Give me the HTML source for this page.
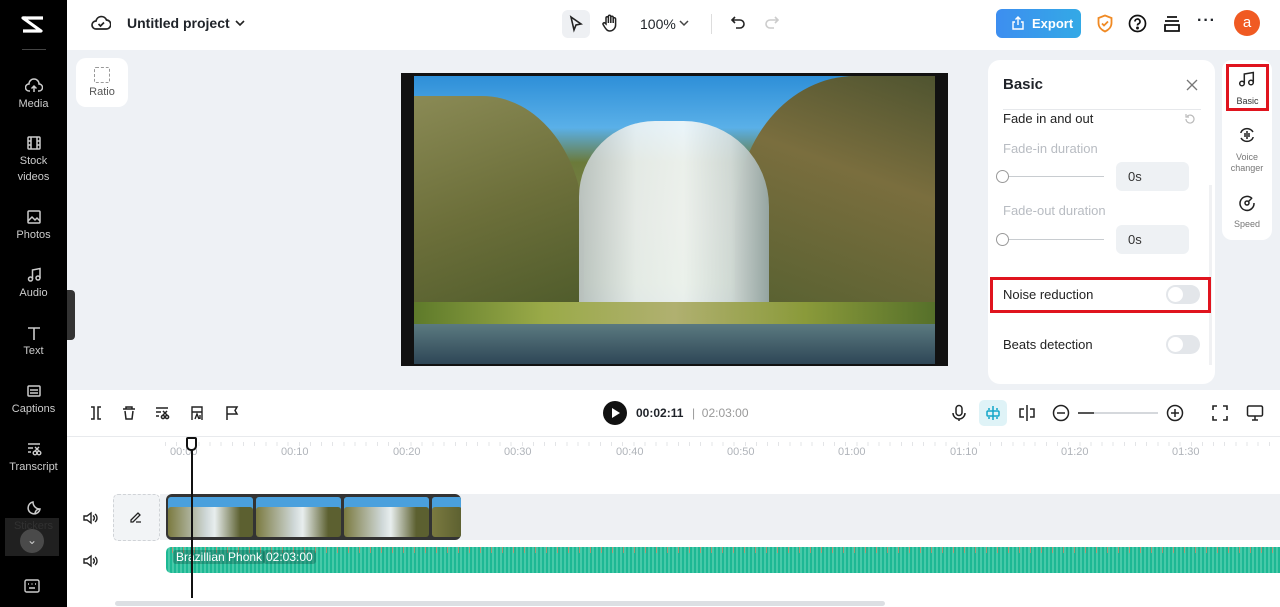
<!DOCTYPE html><html><head><style>
*{margin:0;padding:0;box-sizing:border-box}
body{width:1280px;height:607px;overflow:hidden;font-family:"Liberation Sans",sans-serif;background:#fff;position:relative;color:#1f2329}
.a{position:absolute}
.side{left:0;top:0;width:67px;height:607px;background:#000}
.si{position:absolute;left:0;width:67px;text-align:center;color:#ccc;font-size:11px;line-height:16px}
.si svg{display:block;margin:0 auto 2px}
.tick{position:absolute;top:446px;font-size:11px;color:#b0b4ba}
</style></head><body>
<div class="a side"></div>
<svg class="a" style="left:18px;top:13px" width="28" height="24" viewBox="0 0 28 24" fill="none" stroke="#fff" stroke-width="3.2" stroke-linejoin="round"><path d="M25 5H5l18 13H5"/><path d="M5 5l3 0M5 18l0 0"/></svg>
<div class="a" style="left:22px;top:49px;width:24px;height:1px;background:#444"></div>
<div class="si" style="top:78px"><svg width="18" height="16" viewBox="0 0 18 16" fill="none" stroke="#ccc" stroke-width="1.5"><path d="M5 13H4a3.5 3.5 0 0 1 0-7 5 5 0 0 1 10 0 3.5 3.5 0 0 1 0 7h-1M9 14V8M6.5 10.5 9 8l2.5 2.5"/></svg>Media</div>
<div class="si" style="top:135px"><svg width="16" height="16" viewBox="0 0 16 16" fill="none" stroke="#ccc" stroke-width="1.5"><rect x="2" y="2" width="12" height="12" rx="1"/><path d="M5 2v12M11 2v12M2 6h3M2 10h3M11 6h3M11 10h3"/></svg>Stock<br>videos</div>
<div class="si" style="top:209px"><svg width="16" height="16" viewBox="0 0 16 16" fill="none" stroke="#ccc" stroke-width="1.5"><rect x="2" y="2" width="12" height="12" rx="1"/><path d="M2 12l4-4 3 3 2-2 3 3"/></svg>Photos</div>
<div class="si" style="top:267px"><svg width="16" height="16" viewBox="0 0 16 16" fill="none" stroke="#ccc" stroke-width="1.5"><circle cx="4.5" cy="12" r="2"/><circle cx="12" cy="11" r="2"/><path d="M6.5 12V3l7.5-1.5V11"/></svg>Audio</div>
<div class="si" style="top:325px"><svg width="16" height="16" viewBox="0 0 16 16" fill="none" stroke="#ccc" stroke-width="1.6"><path d="M2 3h12M8 3v12"/></svg>Text</div>
<div class="si" style="top:383px"><svg width="16" height="16" viewBox="0 0 16 16" fill="none" stroke="#ccc" stroke-width="1.5"><rect x="2" y="3" width="12" height="10" rx="1"/><path d="M4 7h8M4 10h8"/></svg>Captions</div>
<div class="si" style="top:441px"><svg width="16" height="16" viewBox="0 0 16 16" fill="none" stroke="#ccc" stroke-width="1.4"><path d="M2 3h12M2 7h5M2 11h3"/><circle cx="9" cy="12" r="1.8"/><circle cx="13" cy="12" r="1.8"/><path d="M9 10l4-4M13 10l-4-4"/></svg>Transcript</div>
<div class="si" style="top:500px;color:#555"><svg width="16" height="16" viewBox="0 0 16 16" fill="none" stroke="#ccc" stroke-width="1.5"><path d="M14 9A6 6 0 1 1 7 2c0 4 3 7 7 7zM9 14c0-3 2-5 5-5"/></svg>Stickers</div>
<div class="a" style="left:5px;top:518px;width:54px;height:38px;background:rgba(40,40,40,.8)"></div>
<div class="a" style="left:20px;top:529px;width:24px;height:24px;border-radius:50%;background:#4a4a4a;color:#ccc;font-size:12px;text-align:center;line-height:22px">⌄</div>
<svg class="a" style="left:24px;top:579px" width="16" height="14" viewBox="0 0 16 14" fill="none" stroke="#ccc" stroke-width="1.4"><rect x="1" y="1" width="14" height="12" rx="1.5"/><path d="M4 5h1M7.5 5h1M11 5h1M5 9h6"/></svg>
<div class="a" style="left:67px;top:290px;width:8px;height:50px;background:#333;border-radius:0 4px 4px 0"></div>

<!-- top bar -->
<svg class="a" style="left:91px;top:14px" width="20" height="18" viewBox="0 0 20 18" fill="none" stroke="#222" stroke-width="1.7"><path d="M6 15H5a4 4 0 0 1 0-8 5.5 5.5 0 0 1 10.5-1A4 4 0 0 1 15 15z"/><path d="M7.5 10l2 2 3.5-3.5"/></svg>
<div class="a" style="left:127px;top:15px;font-size:14px;font-weight:bold">Untitled project</div>
<svg class="a" style="left:235px;top:19px" width="10" height="8" viewBox="0 0 10 8" fill="none" stroke="#222" stroke-width="1.6"><path d="M1 2l4 4 4-4"/></svg>
<div class="a" style="left:562px;top:10px;width:28px;height:28px;border-radius:6px;background:#eef0f3"></div>
<svg class="a" style="left:569px;top:15px" width="14" height="18" viewBox="0 0 14 18" fill="none" stroke="#222" stroke-width="1.6"><path d="M2 2l10 7-5 1-2 5z"/></svg>
<svg class="a" style="left:601px;top:14px" width="18" height="18" viewBox="0 0 18 18" fill="none" stroke="#222" stroke-width="1.5"><path d="M5 10V4a1.2 1.2 0 0 1 2.4 0v5V2.5a1.2 1.2 0 0 1 2.4 0V9V3.5a1.2 1.2 0 0 1 2.4 0V9V5a1.2 1.2 0 0 1 2.4 0v6a6 6 0 0 1-6 6c-2 0-3-1-5-4l-1.5-2.5a1.2 1.2 0 0 1 2-1.3z"/></svg>
<div class="a" style="left:640px;top:16px;font-size:14px">100%</div>
<svg class="a" style="left:679px;top:20px" width="10" height="7" viewBox="0 0 10 7" fill="none" stroke="#444" stroke-width="1.5"><path d="M1 1l4 4 4-4"/></svg>
<div class="a" style="left:711px;top:14px;width:1px;height:20px;background:#ddd"></div>
<svg class="a" style="left:730px;top:15px" width="16" height="16" viewBox="0 0 16 16" fill="none" stroke="#222" stroke-width="1.6"><path d="M5 2L2 5l3 3M2 5h8a4 4 0 0 1 0 8H6"/></svg>
<svg class="a" style="left:764px;top:15px" width="16" height="16" viewBox="0 0 16 16" fill="none" stroke="#ccc" stroke-width="1.6"><path d="M11 2l3 3-3 3M14 5H6a4 4 0 0 0 0 8h4"/></svg>
<div class="a" style="left:996px;top:9px;width:85px;height:29px;border-radius:6px;background:linear-gradient(90deg,#3d8ef0,#33a9e6);color:#fff;font-size:13px;font-weight:bold;line-height:29px;padding-left:36px">Export</div>
<svg class="a" style="left:1011px;top:16px" width="14" height="14" viewBox="0 0 14 14" fill="none" stroke="#fff" stroke-width="1.4"><path d="M4 6H2v7h10V6h-2M7 9V1M4.5 3.5 7 1l2.5 2.5"/></svg>
<svg class="a" style="left:1096px;top:14px" width="18" height="19" viewBox="0 0 18 19" fill="none" stroke="#f08a24" stroke-width="1.8"><path d="M9 1.5l6.5 2.5v5c0 4-3 7-6.5 8.5C5.5 16 2.5 13 2.5 9V4z"/><path d="M6 9.5l2 2 4-4"/></svg>
<svg class="a" style="left:1128px;top:14px" width="19" height="19" viewBox="0 0 19 19" fill="none" stroke="#111" stroke-width="1.7"><circle cx="9.5" cy="9.5" r="8"/><path d="M7 7.5a2.5 2.5 0 1 1 3.5 2.3c-.8.4-1 .9-1 1.7"/><circle cx="9.5" cy="14" r=".6" fill="#111"/></svg>
<svg class="a" style="left:1163px;top:14px" width="18" height="19" viewBox="0 0 18 19" fill="none" stroke="#111" stroke-width="1.8"><path d="M4 3h10M2 7h14M2 11h14v6H2z"/></svg>
<div class="a" style="left:1197px;top:12px;font-size:16px;font-weight:bold;letter-spacing:1px">···</div>
<div class="a" style="left:1234px;top:10px;width:26px;height:26px;border-radius:50%;background:#f05a22;color:#fff;text-align:center;line-height:25px;font-size:15px">a</div>

<!-- canvas area -->
<div class="a" style="left:67px;top:50px;width:1213px;height:340px;background:#eef1f5"></div>
<div class="a" style="left:67px;top:290px;width:8px;height:50px;background:#333;border-radius:0 4px 4px 0"></div>
<div class="a" style="left:76px;top:58px;width:52px;height:49px;background:#fff;border-radius:10px;text-align:center;font-size:11px;color:#555;padding-top:9px"><div style="width:16px;height:16px;border:1.5px dashed #999;border-radius:2px;margin:0 auto 3px"></div>Ratio</div>
<div class="a" style="left:401px;top:73px;width:547px;height:293px;background:#111"></div>
<div class="a" style="left:414px;top:76px;width:521px;height:288px;overflow:hidden;background:linear-gradient(180deg,#2e8fd8 0%,#5ab0e8 18%,#6b7a3a 30%,#7d8048 50%,#6b8a3c 72%,#3f5f4a 82%,#2d4a5a 100%)">
 <div class="a" style="left:0;top:20px;width:170px;height:220px;background:linear-gradient(160deg,#8a8a55,#6c6f3a 50%,#4d5a2a);border-radius:0 60% 0 0"></div>
 <div class="a" style="right:0;top:0;width:200px;height:240px;background:linear-gradient(200deg,#4f5430,#7a6e3e 40%,#556030);border-radius:60% 0 0 0"></div>
 <div class="a" style="left:165px;top:45px;width:190px;height:190px;background:linear-gradient(90deg,#c0c8c8,#eef3f3 30%,#f6fafa 55%,#d8e0e0 80%,#9aa);border-radius:40% 45% 0 0;opacity:.92"></div>
 <div class="a" style="left:0;top:226px;width:521px;height:22px;background:linear-gradient(90deg,#5e7a2a,#9aaa48,#b0b070,#8a9a3a,#56702a)"></div>
 <div class="a" style="left:0;top:248px;width:521px;height:40px;background:linear-gradient(180deg,#5b7a80,#2e4656)"></div>
</div>

<!-- panel -->
<div class="a" style="left:988px;top:60px;width:227px;height:324px;background:#fff;border-radius:12px"></div>
<div class="a" style="left:1003px;top:76px;font-size:15px;font-weight:bold">Basic</div>
<svg class="a" style="left:1186px;top:79px" width="12" height="12" viewBox="0 0 12 12" stroke="#777" stroke-width="1.3"><path d="M1 1l10 10M11 1L1 11"/></svg>
<div class="a" style="left:1003px;top:109px;width:198px;height:1px;background:#e6e8eb"></div>
<div class="a" style="left:1003px;top:111px;font-size:13px;color:#222">Fade in and out</div>
<svg class="a" style="left:1184px;top:113px" width="12" height="12" viewBox="0 0 12 12" fill="none" stroke="#bbb" stroke-width="1.2"><path d="M2 6a4 4 0 1 0 1.2-2.8M2 1v3h3"/></svg>
<div class="a" style="left:1003px;top:141px;font-size:13px;color:#b8bcc2">Fade-in duration</div>
<div class="a" style="left:1003px;top:176px;width:101px;height:1px;background:#c8ccd0"></div>
<div class="a" style="left:996px;top:170px;width:13px;height:13px;border-radius:50%;border:1px solid #999;background:#fff"></div>
<div class="a" style="left:1116px;top:162px;width:73px;height:29px;border-radius:6px;background:#eef1f4;font-size:13px;line-height:29px;padding-left:12px;color:#333">0s</div>
<div class="a" style="left:1003px;top:203px;font-size:13px;color:#b8bcc2">Fade-out duration</div>
<div class="a" style="left:1003px;top:239px;width:101px;height:1px;background:#c8ccd0"></div>
<div class="a" style="left:996px;top:233px;width:13px;height:13px;border-radius:50%;border:1px solid #999;background:#fff"></div>
<div class="a" style="left:1116px;top:225px;width:73px;height:29px;border-radius:6px;background:#eef1f4;font-size:13px;line-height:29px;padding-left:12px;color:#333">0s</div>
<div class="a" style="left:1209px;top:185px;width:3px;height:180px;background:#f0f1f3"></div>
<div class="a" style="left:990px;top:277px;width:221px;height:36px;border:3px solid #e0141e"></div>
<div class="a" style="left:1003px;top:287px;font-size:13px;color:#222">Noise reduction</div>
<div class="a" style="left:1166px;top:285px;width:34px;height:19px;border-radius:10px;background:#e3e6ea"><div style="position:absolute;left:2px;top:2px;width:15px;height:15px;border-radius:50%;background:#fff"></div></div>
<div class="a" style="left:1003px;top:337px;font-size:13px;color:#222">Beats detection</div>
<div class="a" style="left:1166px;top:335px;width:34px;height:19px;border-radius:10px;background:#e3e6ea"><div style="position:absolute;left:2px;top:2px;width:15px;height:15px;border-radius:50%;background:#fff"></div></div>

<!-- right tabs -->
<div class="a" style="left:1222px;top:60px;width:50px;height:180px;background:#fff;border-radius:10px"></div>
<div class="a" style="left:1226px;top:64px;width:43px;height:47px;border:3px solid #e0141e"></div>
<svg class="a" style="left:1238px;top:71px" width="18" height="16" viewBox="0 0 18 16" fill="none" stroke="#222" stroke-width="1.5"><circle cx="4" cy="12.5" r="2.3"/><circle cx="13" cy="11.5" r="2.3"/><path d="M6.3 12.5V3L15.3 1.5v10"/></svg>
<div class="a" style="left:1226px;top:96px;width:43px;text-align:center;font-size:9px;color:#333">Basic</div>
<svg class="a" style="left:1238px;top:127px" width="18" height="16" viewBox="0 0 18 16" fill="none" stroke="#222" stroke-width="1.5"><path d="M3 5a7 7 0 0 1 12 0M3 11a7 7 0 0 0 12 0M7 6v4M9 4v8M11 6v4M3 5v1M15 10v1"/></svg>
<div class="a" style="left:1222px;top:152px;width:50px;text-align:center;font-size:9px;color:#777;line-height:11px">Voice<br>changer</div>
<svg class="a" style="left:1238px;top:194px" width="18" height="18" viewBox="0 0 18 18" fill="none" stroke="#222" stroke-width="1.5"><path d="M14 4.5A7 7 0 1 0 16 9"/><circle cx="9" cy="9" r="2"/><path d="M10.5 7.5 14 4"/></svg>
<div class="a" style="left:1222px;top:219px;width:50px;text-align:center;font-size:9px;color:#777">Speed</div>

<!-- timeline toolbar -->
<div class="a" style="left:67px;top:436px;width:1213px;height:1px;background:#e8eaed"></div>
<svg class="a" style="left:88px;top:405px" width="110" height="16" viewBox="0 0 110 16" fill="none" stroke="#222" stroke-width="1.5"><path d="M3 2h3v12H3M13 2h-3v12h3"/><path d="M35 4h12M38 4V2h6v2M37 6l1 8h6l1-8"/><path d="M68 3h12M68 7h5M68 11h3"/><circle cx="75" cy="12" r="1.6"/><circle cx="79" cy="12" r="1.6"/><path d="M75 10l4-4M79 10l-4-4"/></svg>
<svg class="a" style="left:190px;top:405px" width="14" height="16" viewBox="0 0 14 16" fill="none" stroke="#222" stroke-width="1.4"><path d="M2 2h10v5H2zM2 7v8M12 7v8M5 14l2-5 2 5M10 10v4"/></svg>
<svg class="a" style="left:225px;top:405px" width="14" height="16" viewBox="0 0 14 16" fill="none" stroke="#222" stroke-width="1.5"><path d="M2 15V2h10l-2 3.5 2 3.5H2"/></svg>
<div class="a" style="left:603px;top:401px;width:24px;height:24px;border-radius:50%;background:#111"></div>
<svg class="a" style="left:611px;top:407px" width="10" height="12" viewBox="0 0 10 12"><path d="M1 1l8 5-8 5z" fill="#fff"/></svg>
<div class="a" style="left:636px;top:406px;font-size:12px;font-weight:bold">00:02:11</div>
<div class="a" style="left:692px;top:406px;font-size:12px;color:#999">| &nbsp;02:03:00</div>
<svg class="a" style="left:951px;top:404px" width="16" height="18" viewBox="0 0 16 18" fill="none" stroke="#222" stroke-width="1.5"><rect x="5" y="1.5" width="6" height="10" rx="3"/><path d="M2 9a6 6 0 0 0 12 0M8 15v2"/></svg>
<div class="a" style="left:979px;top:400px;width:28px;height:26px;border-radius:5px;background:#dff3f7"></div>
<svg class="a" style="left:985px;top:405px" width="16" height="16" viewBox="0 0 16 16" fill="none" stroke="#12a6c9" stroke-width="1.5"><rect x="2" y="6" width="12" height="5" rx="1"/><path d="M8 1v14M4 3v2M12 3v2M4 12v2M12 12v2"/></svg>
<svg class="a" style="left:1018px;top:404px" width="18" height="18" viewBox="0 0 18 18" fill="none" stroke="#222" stroke-width="1.5"><path d="M9 1v16M6 5H2v8h4M12 5h4v8h-4"/></svg>
<svg class="a" style="left:1052px;top:404px" width="18" height="18" viewBox="0 0 18 18" fill="none" stroke="#222" stroke-width="1.5"><circle cx="9" cy="9" r="7.5"/><path d="M5 9h8"/></svg>
<div class="a" style="left:1078px;top:412px;width:80px;height:2px;background:#d5d8dc"></div>
<div class="a" style="left:1078px;top:412px;width:16px;height:2px;background:#555"></div>
<svg class="a" style="left:1166px;top:404px" width="18" height="18" viewBox="0 0 18 18" fill="none" stroke="#222" stroke-width="1.5"><circle cx="9" cy="9" r="7.5"/><path d="M5 9h8M9 5v8"/></svg>
<svg class="a" style="left:1212px;top:405px" width="16" height="16" viewBox="0 0 16 16" fill="none" stroke="#222" stroke-width="1.6"><path d="M1 5V1h4M11 1h4v4M15 11v4h-4M5 15H1v-4"/></svg>
<svg class="a" style="left:1246px;top:404px" width="18" height="18" viewBox="0 0 18 18" fill="none" stroke="#222" stroke-width="1.5"><rect x="1.5" y="2" width="15" height="10" rx="1.5"/><path d="M6 16h6M9 12v4"/></svg>

<!-- ruler -->
<div class="a" style="left:165px;top:442px;width:1115px;height:12px;background:repeating-linear-gradient(90deg,#d0d3d7 0 1px,transparent 1px 11.15px);opacity:.6;clip-path:inset(0 0 8px 0)"></div>
<div class="tick" style="left:170px">00:00</div>
<div class="tick" style="left:281px">00:10</div><div class="tick" style="left:393px">00:20</div><div class="tick" style="left:504px">00:30</div><div class="tick" style="left:616px">00:40</div><div class="tick" style="left:727px">00:50</div><div class="tick" style="left:838px">01:00</div><div class="tick" style="left:950px">01:10</div><div class="tick" style="left:1061px">01:20</div><div class="tick" style="left:1172px">01:30</div>

<!-- tracks -->
<div class="a" style="left:160px;top:494px;width:1120px;height:46px;background:#eef0f3"></div>
<svg class="a" style="left:82px;top:511px" width="16" height="14" viewBox="0 0 16 14" fill="none" stroke="#222" stroke-width="1.4"><path d="M2 5h3l4-3v10l-4-3H2zM11 4.5a3 3 0 0 1 0 5M13 3a5 5 0 0 1 0 8"/></svg>
<svg class="a" style="left:82px;top:554px" width="16" height="14" viewBox="0 0 16 14" fill="none" stroke="#222" stroke-width="1.4"><path d="M2 5h3l4-3v10l-4-3H2zM11 4.5a3 3 0 0 1 0 5M13 3a5 5 0 0 1 0 8"/></svg>
<div class="a" style="left:113px;top:494px;width:47px;height:47px;border:1px dashed #d0d3d7;border-radius:5px;background:#f2f4f6"></div>
<svg class="a" style="left:129px;top:510px" width="14" height="14" viewBox="0 0 14 14" fill="none" stroke="#222" stroke-width="1.3"><path d="M2 10l7-7 2 2-7 7H2zM7 12h5"/></svg>
<div class="a" style="left:166px;top:494px;width:295px;height:46px;border-radius:6px;background:#333;padding:3px 2px;display:flex;gap:3px;overflow:hidden">
 <div style="flex:0 0 85px;background:linear-gradient(90deg,#7b7a40,#cfd8d8 45%,#e8eeee 55%,#5c6030 85%);border-radius:3px;box-shadow:inset 0 10px 0 #4aa0dd"></div>
 <div style="flex:0 0 85px;background:linear-gradient(90deg,#7b7a40,#cfd8d8 45%,#e8eeee 55%,#5c6030 85%);border-radius:3px;box-shadow:inset 0 10px 0 #4aa0dd"></div>
 <div style="flex:0 0 85px;background:linear-gradient(90deg,#7b7a40,#cfd8d8 45%,#e8eeee 55%,#5c6030 85%);border-radius:3px;box-shadow:inset 0 10px 0 #4aa0dd"></div>
 <div style="flex:0 0 30px;background:linear-gradient(90deg,#7b7a40,#5c6030);border-radius:3px;box-shadow:inset 0 10px 0 #4aa0dd"></div>
</div>
<div class="a" style="left:166px;top:547px;width:1114px;height:26px;border-radius:5px 0 0 5px;background:repeating-linear-gradient(90deg,#1db894 0 2px,#47c9a8 2px 4px)"></div>
<div class="a" style="left:166px;top:547px;width:1114px;height:6px;background:repeating-linear-gradient(90deg,transparent 0 6px,#e58060 6px 7px,transparent 7px 11px);opacity:.7"></div>
<div class="a" style="left:173px;top:550px;font-size:12px;color:#fff;background:rgba(20,80,70,.35);padding:0 3px;border-radius:3px">Brazillian Phonk</div>
<div class="a" style="left:263px;top:550px;font-size:12px;color:#fff;background:rgba(20,80,70,.35);padding:0 3px;border-radius:3px">02:03:00</div>
<div class="a" style="left:191px;top:446px;width:2px;height:152px;background:#111"></div>
<div class="a" style="left:186px;top:437px;width:11px;height:14px;border:2px solid #111;border-radius:2px 2px 5px 5px;background:#fff"></div>
<div class="a" style="left:115px;top:601px;width:770px;height:5px;border-radius:3px;background:#dcdfe3"></div>
</body></html>
